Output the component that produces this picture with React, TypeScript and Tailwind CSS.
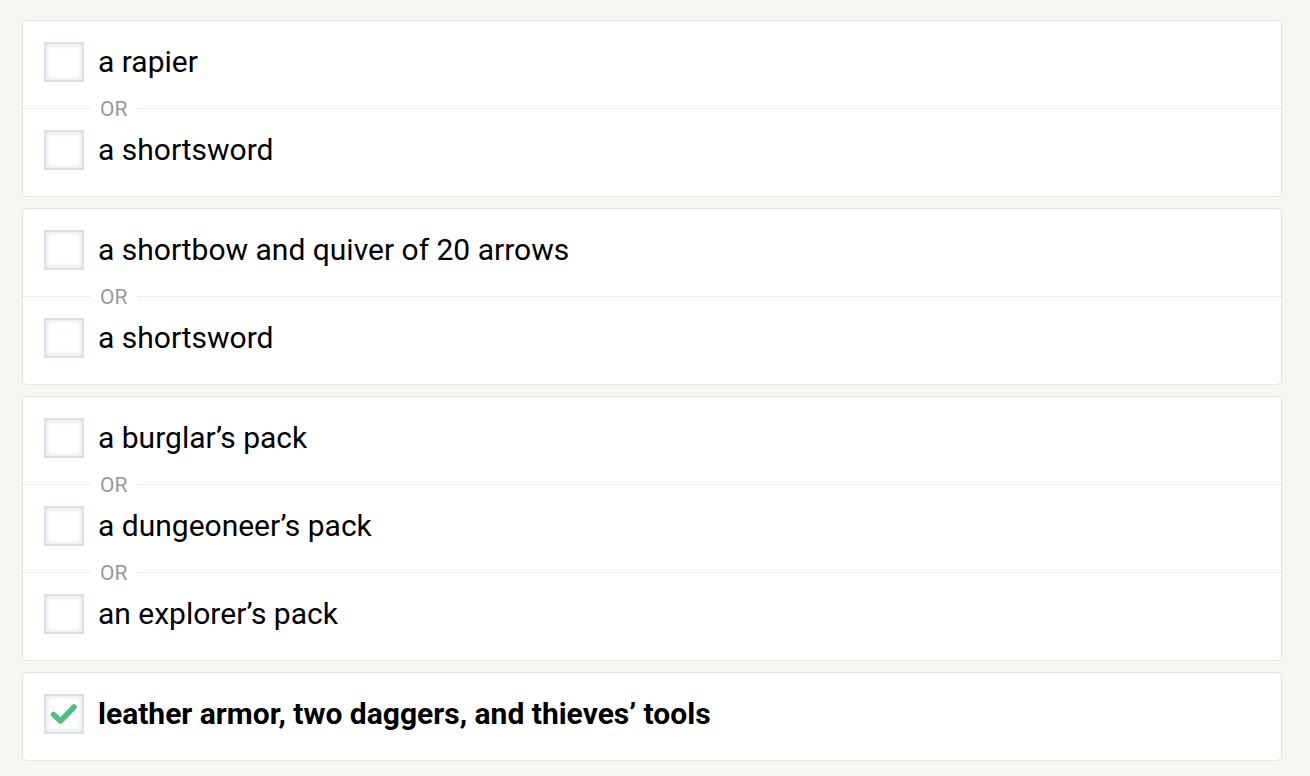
import React from 'react';

const groups: { options: string[]; checked?: boolean }[] = [
  { options: ['a rapier', 'a shortsword'] },
  { options: ['a shortbow and quiver of 20 arrows', 'a shortsword'] },
  { options: ['a burglar’s pack', 'a dungeoneer’s pack', 'an explorer’s pack'] },
  { options: ['leather armor, two daggers, and thieves’ tools'], checked: true },
];

function Checkbox({ checked }: { checked?: boolean }) {
  return (
    <div className="w-10 h-10 flex-shrink-0 border-2 border-[#dae1e8] bg-white shadow-[inset_0_0_6px_rgba(170,190,210,0.45)] flex items-center justify-center">
      {checked && (
        <svg width="28" height="24" viewBox="0 0 28 24" fill="none">
          <path d="M3.5 12.5 L10.5 19 L24 5" stroke="#4dbf7e" strokeWidth="5.5" strokeLinecap="round" strokeLinejoin="round" />
        </svg>
      )}
    </div>
  );
}

export default function App() {
  return (
    <main className="min-h-[776px] bg-[#f7f7f1] pt-5 px-[22px] font-['Roboto',sans-serif] text-black">
      <div className="w-[1260px] flex flex-col gap-[11px]">
        {groups.map((group, gi) => (
          <div key={gi} className="bg-white border border-[#e3e3e0] rounded-[5px]">
            {group.options.map((opt, oi) => (
              <div key={oi}>
                {oi > 0 && (
                  <div className="relative h-px border-t border-dotted border-[#dcdcdc]">
                    <span className="absolute left-[66px] -top-[12px] bg-white px-[11px] text-[21px] leading-[24px] text-[#999]">
                      OR
                    </span>
                  </div>
                )}
                <div className="flex items-center gap-[14px] pl-[21px] pt-[21px] pb-[26px]">
                  <Checkbox checked={group.checked} />
                  <span className={`text-[30px] leading-[34px] ${group.checked ? 'font-bold' : ''}`}>{opt}</span>
                </div>
              </div>
            ))}
          </div>
        ))}
      </div>
    </main>
  );
}
